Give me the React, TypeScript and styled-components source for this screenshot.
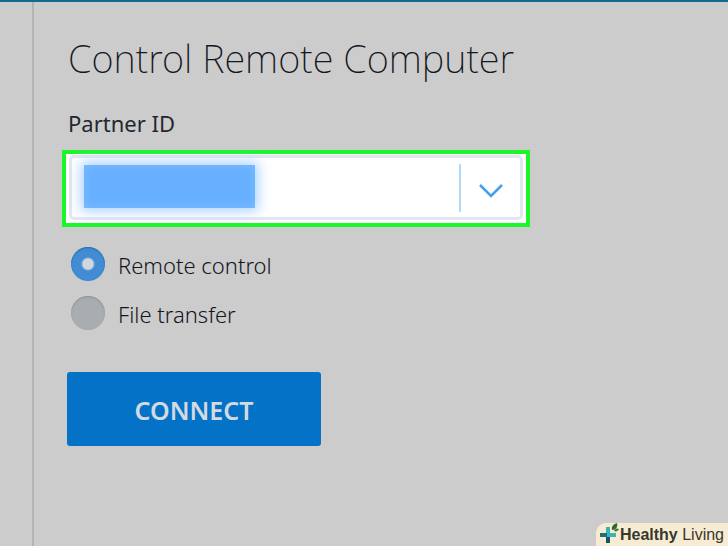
import React, { useState } from "react";
import styled, { createGlobalStyle } from "styled-components";

const GlobalStyle = createGlobalStyle`
  *, *::before, *::after { box-sizing: border-box; }
  body {
    margin: 0;
    background: #cccccc;
    color: #24262e;
    font-family: "Noto Sans", "Open Sans", sans-serif;
  }
`;

const Page = styled.div`
  display: flex;
  min-height: 100vh;
  border-top: 2px solid #126a90;
`;

const Rail = styled.aside`
  flex: 0 0 34px;
  border-right: 2px solid #b4b4b4;
`;

const Panel = styled.main`
  flex: 1;
  padding: 29px 28px;
`;

const Form = styled.form`
  display: flex;
  flex-direction: column;
  align-items: flex-start;
`;

const Title = styled.h1`
  margin: 0 0 22px 6px;
  color: #14161e;
  font-size: 38px;
  font-weight: 200;
  line-height: 54px;
  white-space: nowrap;
`;

const FieldLabel = styled.label`
  margin: 0 0 11px 6px;
  font-size: 22px;
  line-height: 32px;
`;

const Highlight = styled.div`
  width: 100%;
  max-width: 468px;
  padding: 1px 3px 3px;
  background: #ffffff;
  border: 4px solid #1bf62a;
`;

const ComboBox = styled.div`
  display: flex;
  align-items: center;
  height: 65px;
  border: 3px solid #e4e5f3;
  border-radius: 5px;
`;

const InputArea = styled.div`
  position: relative;
  flex: 1;
  align-self: stretch;
`;

const IdInput = styled.input`
  width: 100%;
  height: 100%;
  padding: 0 12px;
  border: 0;
  outline: 0;
  background: transparent;
  color: #24262e;
  font: 22px "Noto Sans", sans-serif;
`;

const Redaction = styled.span`
  position: absolute;
  top: 7px;
  left: 12px;
  width: 171px;
  height: 43px;
  background: #66b0ff;
  box-shadow: 0 0 12px 3px #a9d2ff, inset 0 0 10px #80bdff;
  pointer-events: none;
`;

const DropButton = styled.button`
  display: flex;
  align-items: center;
  justify-content: center;
  width: 61px;
  height: 48px;
  padding: 7px 0 0 1px;
  border: 0;
  border-left: 2px solid #b3d9f8;
  background: transparent;
`;

const Options = styled.fieldset`
  display: flex;
  flex-direction: column;
  gap: 14px;
  margin: 19px 0 0 9px;
  padding: 0;
  border: 0;
`;

const Option = styled.label`
  display: flex;
  align-items: center;
  gap: 13px;
  height: 35px;
  color: #14161e;
  font-size: 22px;
  font-weight: 300;
  line-height: 32px;
`;

const OptionText = styled.span`
  padding-top: 3px;
`;

const Radio = styled.input`
  appearance: none;
  width: 34px;
  height: 34px;
  margin: 0;
  border-radius: 50%;
  background: #a7adb1;
  box-shadow: inset 0 1px 2px #8c9296;

  &:checked {
    background: radial-gradient(circle, #d3d6da 5px, #428cd6 7px);
    box-shadow: inset 0 1px 2px #306ba7;
  }
`;

const ConnectButton = styled.button`
  width: 254px;
  height: 74px;
  margin: 42px 0 0 5px;
  padding: 2px 0 0;
  border: 0;
  border-radius: 3px;
  background: #0473c7;
  color: #d3dae2;
  font: 600 25px "Noto Sans", sans-serif;
`;

const Brand = styled.footer`
  position: fixed;
  right: 0;
  bottom: 0;
  display: flex;
  align-items: center;
  height: 23px;
  padding: 0 4px 0 3px;
  border-top-left-radius: 10px;
  background: #f7ecd3;
  color: #38382e;
  font: 16px "Liberation Sans", Arial, sans-serif;
  white-space: nowrap;
`;

const BrandMark = styled.svg`
  width: 21px;
  height: 23px;
`;

const modes = ["Remote control", "File transfer"];

export default function App() {
  const [mode, setMode] = useState(modes[0]);
  return (
    <>
      <GlobalStyle />
      <Page>
        <Rail />
        <Panel>
          <Form onSubmit={(event) => event.preventDefault()}>
            <Title>Control Remote Computer</Title>
            <FieldLabel htmlFor="partner-id">Partner ID</FieldLabel>
            <Highlight>
              <ComboBox>
                <InputArea>
                  <IdInput id="partner-id" type="text" autoComplete="off" />
                  <Redaction />
                </InputArea>
                <DropButton type="button" aria-label="Show recent partners">
                  <svg width="26" height="16" viewBox="0 0 26 16" fill="none">
                    <path d="M2 2 L13 13 L24 2" stroke="#479fec" strokeWidth="2.6" />
                  </svg>
                </DropButton>
              </ComboBox>
            </Highlight>
            <Options aria-label="Connection mode">
              {modes.map((name) => (
                <Option key={name}>
                  <Radio
                    type="radio"
                    name="mode"
                    checked={mode === name}
                    onChange={() => setMode(name)}
                  />
                  <OptionText>{name}</OptionText>
                </Option>
              ))}
            </Options>
            <ConnectButton type="submit">CONNECT</ConnectButton>
          </Form>
        </Panel>
      </Page>
      <Brand>
        <BrandMark viewBox="0 0 21 23" aria-hidden="true">
          <path d="M1 12 H17" stroke="#1f8d96" strokeWidth="4" />
          <path d="M9 12 V20" stroke="#155562" strokeWidth="4" />
          <path d="M9 4 V12 H17" fill="none" stroke="#38b5b9" strokeWidth="4" />
          <path d="M1 12 H8" stroke="#1d6f7a" strokeWidth="4" />
          <path d="M13 7 C12 3 15 1 18 0 C19 4 17 7 13 7 Z" fill="#2c6b2d" />
          <path d="M15 8 C16 5 18 5 20 6 C19 8 17 9 15 8 Z" fill="#3b7c37" />
        </BrandMark>
        <span><strong>Healthy</strong> Living</span>
      </Brand>
    </>
  );
}
